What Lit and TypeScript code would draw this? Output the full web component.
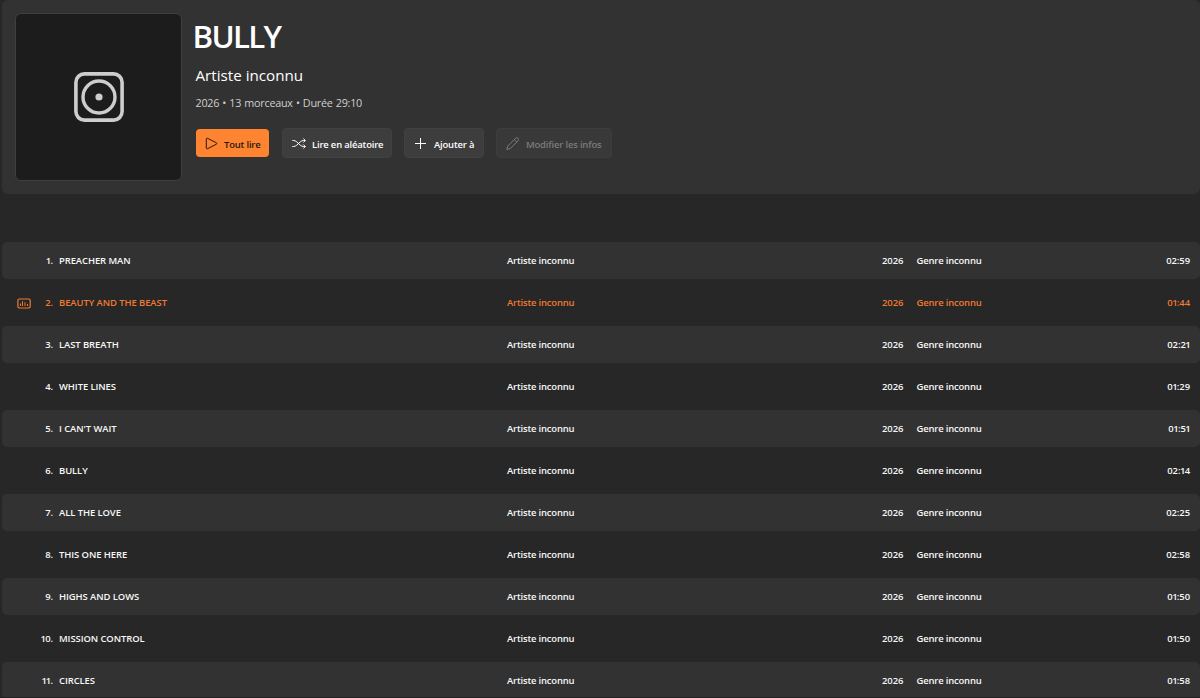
import { LitElement, html, css, svg } from "lit";
import { classMap } from "lit/directives/class-map.js";

interface Track {
  title: string;
  time: string;
}

const TRACKS: Track[] = [
  { title: "PREACHER MAN", time: "02:59" },
  { title: "BEAUTY AND THE BEAST", time: "01:44" },
  { title: "LAST BREATH", time: "02:21" },
  { title: "WHITE LINES", time: "01:29" },
  { title: "I CAN'T WAIT", time: "01:51" },
  { title: "BULLY", time: "02:14" },
  { title: "ALL THE LOVE", time: "02:25" },
  { title: "THIS ONE HERE", time: "02:58" },
  { title: "HIGHS AND LOWS", time: "01:50" },
  { title: "MISSION CONTROL", time: "01:50" },
  { title: "CIRCLES", time: "01:58" },
];

const ICONS = {
  play: svg`<path d="M1.3 1.9v9.2c0 .6.6.9 1.1.7l9-4.6c.6-.3.6-1.1 0-1.4l-9-4.6c-.5-.2-1.1.1-1.1.7z"/>`,
  shuffle: svg`<path d="M.3 3.500h1.200c1.200 0 2.300.5 3.200 1.300l3.600 3.400c.9.8 2 1.300 3.200 1.300h1.700M.3 9.500h1.200c1.200 0 2.300-.5 3.200-1.300l3.600-3.400C9.200 4 10.300 3.500 11.500 3.500h1.700M11.300 1.500l2 2-2 2M11.300 7.500l2 2-2 2"/>`,
  plus: svg`<path d="M6.5 1v11M1 6.5h11"/>`,
  pencil: svg`<path d="M9.5 1.3a1.75 1.75 0 0 1 2.5 2.5l-7.7 7.7-3.5 1 1-3.5zM8.3 2.5 10.8 5"/>`,
};

/** Sets the digit 1 on a narrower advance than the other digits. */
const digits = (text: string) =>
  [...text].map((c) => (c === "1" ? html`<span class="one">1</span>` : c));

class TrackRow extends LitElement {
  static properties = {
    track: { attribute: false },
    index: { type: Number },
    playing: { type: Boolean },
  };
  declare track: Track;
  declare index: number;
  declare playing: boolean;

  static styles = css`
    :host { display: block; }
    .row {
      box-sizing: border-box;
      display: grid;
      grid-template-columns: 29px 22px 454px 375px 34.5px 1fr auto;
      align-items: center;
      height: 37px;
      padding-right: 10px;
      border-radius: 5px;
      font-size: 9.45px;
      font-weight: 550;
      letter-spacing: -0.08px;
      line-height: 14px;
      white-space: nowrap;
      color: #f7f7f7;
    }
    .striped { background: #323232; }
    .playing { color: #ee7a31; }
    .num { text-align: right; }
    .one { margin: 0 -0.7px 0 -0.4px; }
    .title { padding-left: 6px; }
    .artist, .genre { letter-spacing: -0.17px; }
    .row > .icon { display: flex; padding: 2px 0 0 15px; }
    .icon svg { display: block; fill: none; stroke: currentColor; }
  `;

  render() {
    const classes = { row: true, striped: this.index % 2 === 1, playing: this.playing };
    return html`<div class=${classMap(classes)}>
      <span class="icon">${this.playing
        ? html`<svg width="14" height="11" viewBox="0 0 14 11">
            <rect x=".9" y="1" width="12.3" height="9" rx="1.4" stroke-width="1.2"/>
            <path d="M3.5 5.5V8M5.5 3.2V8M8 4.2V8M10.5 6V8" stroke-width="1"/>
          </svg>`
        : ""}</span>
      <span class="num">${digits(String(this.index))}.</span>
      <span class="title">${this.track.title}</span>
      <span class="artist">Artiste inconnu</span>
      <span>2026</span>
      <span class="genre">Genre inconnu</span>
      <span>${digits(this.track.time)}</span>
    </div>`;
  }
}
customElements.define("track-row", TrackRow);

class AppRoot extends LitElement {
  static styles = css`
    :host {
      display: block;
      box-sizing: border-box;
      height: 698px;
      overflow: hidden;
      background: #272727;
      border-bottom: 1px solid #201f21;
      color: #fff;
      font-family: "Open Sans", "Noto Sans", sans-serif;
    }
    header {
      box-sizing: border-box;
      display: flex;
      height: 194px;
      margin-left: 2px;
      padding: 13px 0 0 13px;
      border-radius: 6px;
      background: #323232;
    }
    .cover {
      box-sizing: border-box;
      display: grid;
      place-items: center;
      width: 167px;
      height: 168px;
      border: 1px solid #3f3f3f;
      border-radius: 6px;
      background: #1c1c1c;
    }
    .cover svg { fill: none; stroke: #cdcdcd; }
    .info { padding-left: 13px; white-space: nowrap; }
    h1 {
      margin: 1px 0 0 -2.5px;
      font-size: 31.3px;
      font-weight: 640;
      letter-spacing: -1.7px;
      line-height: 44px;
    }
    h2 {
      margin: 6px 0 0 0.5px;
      font-size: 15.2px;
      font-weight: 420;
      line-height: 22px;
    }
    .meta {
      margin: 9px 0 0 0.5px;
      color: #cfcfcf;
      font-size: 10.8px;
      letter-spacing: -0.25px;
      word-spacing: 0.6px;
      line-height: 16px;
    }
    .actions { display: flex; gap: 12px; margin-top: 17px; }
    button {
      box-sizing: border-box;
      display: flex;
      align-items: center;
      height: 30px;
      margin: 0;
      padding: 0 0 0 9px;
      border: 1px solid #414141;
      border-radius: 4px;
      background: #3d3d3d;
      color: #fff;
      font: 540 9.45px "Open Sans", "Noto Sans", sans-serif;
      letter-spacing: -0.17px;
      white-space: nowrap;
    }
    button svg { flex: none; fill: none; stroke: currentColor; }
    button span { padding-top: 2px; }
    .play {
      width: 75px;
      height: 30px;
      border-color: #323232;
      background: #ff8432;
      color: #29170c;
      gap: 6px;
      background-clip: padding-box;
    }
    .shuffle { width: 110px; gap: 6px; }
    .add { width: 80px; gap: 7px; }
    .edit { width: 116px; gap: 7px; background: #393939; border-color: #3d3d3d; color: #7b7b7b; }
    .tracks { display: flex; flex-direction: column; gap: 5px; padding: 48px 0 0 2px; }
  `;

  private button(kind: string, icon: unknown, label: string, width = 13) {
    return html`<button class=${kind}>
      <svg width=${width} height="13" viewBox="0 0 ${width} 13">${icon}</svg><span>${label}</span>
    </button>`;
  }

  render() {
    return html`
      <header>
        <div class="cover">
          <svg width="50" height="50" viewBox="0 0 50 50">
            <rect x="1.9" y="1.9" width="46.2" height="46.2" rx="8.5" stroke-width="3.6"/>
            <circle cx="25" cy="25" r="16" stroke-width="3.4"/>
            <circle cx="25" cy="25" r="3.6" fill="#cdcdcd" stroke="none"/>
          </svg>
        </div>
        <div class="info">
          <h1>BULLY</h1>
          <h2>Artiste inconnu</h2>
          <p class="meta">2026 • 13 morceaux • Durée 29:10</p>
          <div class="actions">
            ${this.button("play", ICONS.play, "Tout lire")}
            ${this.button("shuffle", ICONS.shuffle, "Lire en aléatoire", 14)}
            ${this.button("add", ICONS.plus, "Ajouter à")}
            ${this.button("edit", ICONS.pencil, "Modifier les infos")}
          </div>
        </div>
      </header>
      <main class="tracks">
        ${TRACKS.map((track, i) => html`<track-row .track=${track} .index=${i + 1} .playing=${i === 1}></track-row>`)}
      </main>
    `;
  }
}
customElements.define("app-root", AppRoot);
